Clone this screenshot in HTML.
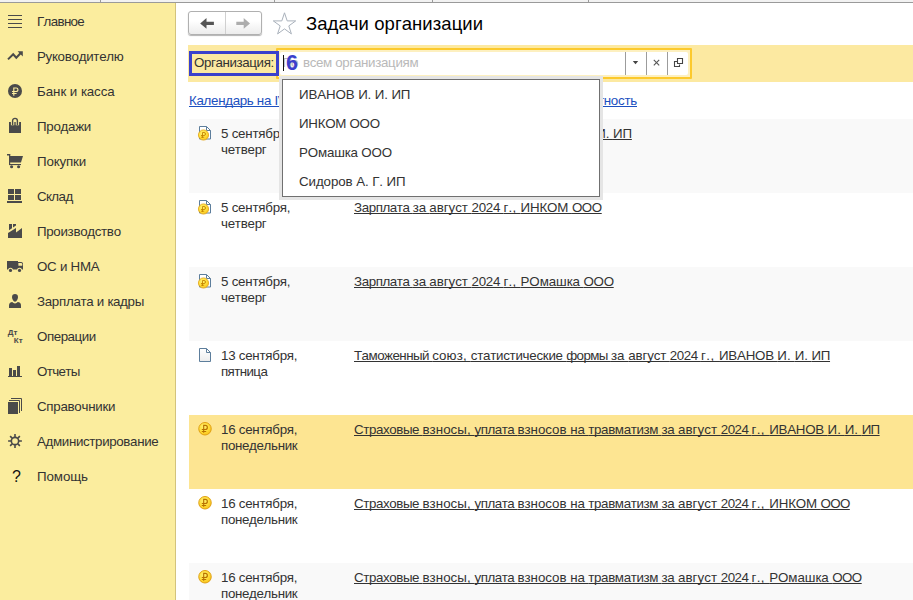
<!DOCTYPE html>
<html lang="ru">
<head>
<meta charset="utf-8">
<title>Задачи организации</title>
<style>
*{box-sizing:border-box;margin:0;padding:0}
html,body{width:913px;height:600px;overflow:hidden;background:#fff}
body{position:relative;font-kerning:none;font-family:"Liberation Sans",Arial,sans-serif;font-size:13.33px;color:#333}
.topstrip{position:absolute;left:0;top:0;width:913px;height:3px;background:#f2f2f2;border-bottom:1px solid #9a9a9a}
.topstrip i{position:absolute;top:0;width:1px;height:2px;background:#9a9a9a}
.side{position:absolute;left:0;top:3px;width:176px;height:597px;background:#fbed9e;border-right:1px solid #d3c37c}
.side .it{position:absolute;left:37px;line-height:16px;font-size:13.33px;color:#333;white-space:nowrap;}
.side .ic{position:absolute;left:0}
.side .q{position:absolute;left:12px;top:465px;font-size:16px;line-height:18px;color:#111}
.nav{position:absolute;left:188px;top:11px;width:74px;height:24px;border:1px solid #b0b0b0;border-radius:3px;background:linear-gradient(#fff 40%,#ececec);box-shadow:0 1px 1px rgba(0,0,0,.3)}
.nav i{position:absolute;left:36px;top:0;width:1px;height:22px;background:#d0d0d0}
.nav svg{position:absolute;left:0;top:0}
.star{position:absolute;left:271px;top:10px}
.title{position:absolute;left:306px;top:13px;font-size:18.5px;line-height:22px;color:#000;white-space:nowrap}
.fbar{position:absolute;left:188px;top:45px;width:725px;height:37px;background:#fce9a1}
.lbl{position:absolute;left:194px;top:55px;font-size:13.33px;line-height:16px;color:#333;white-space:nowrap}
.ann{position:absolute;left:189px;top:51px;width:90px;height:25px;border:3px solid #3a40cc}
.inp{position:absolute;left:276px;top:48px;width:416px;height:31px;border:2px solid #fcc92c;background:#fdf0c0;border-radius:1px}
.inp b{position:absolute;left:2px;top:2px;right:2px;bottom:2px;background:#fff;border-radius:2px}
.inp i{position:absolute;top:2px;width:1px;height:23px;background:#9c9c9c}
.inp svg{position:absolute;top:0;left:0}
.ph{position:absolute;left:282.500px;top:55px;font-size:13.33px;line-height:16px;color:#b9b9b9;white-space:nowrap}
.six{position:absolute;left:286px;top:52px;font-size:21.400px;font-weight:bold;line-height:23px;color:#3a40cc}
.caret{position:absolute;left:283px;top:55px;width:1px;height:16px;background:#111}
.link{position:absolute;top:93px;font-size:13.33px;line-height:16px;color:#1c50c0;text-decoration:underline;text-decoration-skip-ink:none;white-space:nowrap}
.row{position:absolute;left:189px;width:724px;height:74px}
.row.g{background:#f9f9f9}
.row.y{background:#fde592}
.row .d{position:absolute;left:32px;top:7px;font-size:13.33px;line-height:16px;color:#333;white-space:nowrap}
.row .t{position:absolute;left:165px;top:7px;font-size:13.33px;line-height:16px;color:#333;text-decoration:underline;text-decoration-skip-ink:none;white-space:nowrap}
.row .ri{position:absolute;left:8px;top:6px}
.dd{position:absolute;left:282px;top:79px;width:318px;height:118px;background:#fff;border:1px solid #707070;box-shadow:0 0 0 3px #e5e5e5}
.dd div{position:absolute;left:16px;font-size:13.33px;line-height:16px;color:#333;white-space:nowrap}
</style>
</head>
<body>
<svg width="0" height="0" style="position:absolute"><defs>
<radialGradient id="cg" cx="40%" cy="35%" r="70%"><stop offset="0" stop-color="#fff173"/><stop offset=".6" stop-color="#ffdd36"/><stop offset="1" stop-color="#f8bd1a"/></radialGradient>
<linearGradient id="dg" x1="0" y1="0" x2="0" y2="1"><stop offset="0" stop-color="#fff"/><stop offset="1" stop-color="#ececec"/></linearGradient>
</defs></svg>
<div class="topstrip"><i style="left:100px"></i><i style="left:274px"></i><i style="left:432px"></i><i style="left:588px"></i></div>

<div class="side">
<svg class="ic" style="top:5px" width="30" height="30" viewBox="0 0 30 30"><rect x="8" y="7" width="14" height="1" fill="#4a4a4a"/><rect x="8" y="11" width="14" height="1" fill="#4a4a4a"/><rect x="8" y="15" width="14" height="1" fill="#4a4a4a"/><rect x="8" y="19" width="14" height="1" fill="#4a4a4a"/></svg>
<svg class="ic" style="top:38px" width="30" height="30" viewBox="0 0 30 30"><polyline points="8,18.400 13.200,13.300 16.300,16.700 21,11.800" fill="none" stroke="#4a4a4a" stroke-width="2"/><polygon points="17.6,10.2 22.8,10.2 22.8,15.6" fill="#4a4a4a"/></svg>
<svg class="ic" style="top:73px" width="30" height="30" viewBox="0 0 30 30"><circle cx="15" cy="15" r="7" fill="#4a4a4a"/><path d="M13.8 19.8V12H16.200a1.750 1.750 0 0 1 0 3.500H12M12 17.500h4.600" fill="none" stroke="#fbed9e" stroke-width="1.15"/></svg>
<svg class="ic" style="top:108px" width="30" height="30" viewBox="0 0 30 30"><rect x="9" y="11" width="12" height="11" fill="#4a4a4a"/><path d="M12.600 14.300V9.800a2.400 2.400 0 0 1 4.800 0v4.500" fill="none" stroke="#fbed9e" stroke-width="3.400"/><path d="M12.600 14V9.800a2.400 2.400 0 0 1 4.800 0V14" fill="none" stroke="#4a4a4a" stroke-width="1.400"/></svg>
<svg class="ic" style="top:143px" width="30" height="30" viewBox="0 0 30 30"><polygon points="9,10 23,10 21,16.600 9,16.600" fill="#4a4a4a"/><rect x="9" y="8" width="1.200" height="11" fill="#4a4a4a"/><rect x="7" y="8" width="3.200" height="1.500" fill="#4a4a4a"/><rect x="9" y="18" width="12" height="1.100" fill="#4a4a4a"/><circle cx="11.600" cy="20.700" r="1.550" fill="#4a4a4a"/><circle cx="18.600" cy="20.700" r="1.550" fill="#4a4a4a"/></svg>
<svg class="ic" style="top:178px" width="30" height="30" viewBox="0 0 30 30"><rect x="8" y="8" width="6" height="5" fill="#4a4a4a"/><rect x="15" y="8" width="6" height="5" fill="#4a4a4a"/><rect x="8" y="14" width="6" height="5" fill="#4a4a4a"/><rect x="15" y="14" width="6" height="5" fill="#4a4a4a"/><rect x="7" y="20" width="15" height="2" fill="#4a4a4a"/></svg>
<svg class="ic" style="top:213px" width="30" height="30" viewBox="0 0 30 30"><polygon points="8,22 8,17 16,12 16,16.5 22,12 22,22" fill="#4a4a4a"/><polygon points="9,8 12,8 12,12.2 9,14.2" fill="#4a4a4a"/><polygon points="13,8 16,8 16,9.6 13,11.6" fill="#4a4a4a"/></svg>
<svg class="ic" style="top:248px" width="30" height="30" viewBox="0 0 30 30"><path d="M7 10h11v1h3.2a1.8 1.8 0 0 1 1.8 1.8V18.6H7z" fill="#4a4a4a"/><path d="M18.400 12h2.600a1.200 1.200 0 0 1 1.200 1.200v1.600h-3.800z" fill="#fbed9e"/><circle cx="10.5" cy="19.3" r="2.500" fill="#fbed9e"/><circle cx="19.5" cy="19.3" r="2.500" fill="#fbed9e"/><circle cx="10.5" cy="19.4" r="1.6" fill="#4a4a4a"/><circle cx="19.5" cy="19.4" r="1.6" fill="#4a4a4a"/></svg>
<svg class="ic" style="top:283px" width="30" height="30" viewBox="0 0 30 30"><path d="M9 22v-2.5a3.5 3.5 0 0 1 3.5-3.5h5a3.5 3.5 0 0 1 3.5 3.5V22z" fill="#4a4a4a"/><ellipse cx="15" cy="12.400" rx="3.900" ry="5" fill="#fbed9e"/><path d="M15 8c1.900 0 3 1.300 3 3.100 0 2.100-1.300 4.600-3 4.600s-3-2.500-3-4.600C12 9.300 13.100 8 15 8z" fill="#4a4a4a"/></svg>
<svg class="ic" style="top:318px" width="30" height="30" viewBox="0 0 30 30"><text x="7.800" y="13.900" font-family="Liberation Sans,Arial,sans-serif" font-weight="bold" font-size="8" fill="#4a4a4a">Дт</text><text x="13.800" y="22" font-family="Liberation Sans,Arial,sans-serif" font-weight="bold" font-size="8" fill="#4a4a4a">Кт</text></svg>
<svg class="ic" style="top:353px" width="30" height="30" viewBox="0 0 30 30"><rect x="9" y="12" width="3" height="8" fill="#4a4a4a"/><rect x="13" y="14" width="3" height="6" fill="#4a4a4a"/><rect x="17" y="10" width="3" height="10" fill="#4a4a4a"/><rect x="8" y="20" width="14" height="1" fill="#4a4a4a"/></svg>
<svg class="ic" style="top:388px" width="30" height="30" viewBox="0 0 30 30"><rect x="8" y="11" width="10" height="12" fill="#4a4a4a"/><path d="M9 9.500h10.500V22M11 7.500h10.500V20" fill="none" stroke="#4a4a4a" stroke-width="1"/></svg>
<svg class="ic" style="top:423px" width="30" height="30" viewBox="0 0 30 30"><path d="M19.00 15.00L21.90 15.00M17.83 17.83L19.88 19.88M15.00 19.00L15.00 21.90M12.17 17.83L10.12 19.88M11.00 15.00L8.10 15.00M12.17 12.17L10.12 10.12M15.00 11.00L15.00 8.10M17.83 12.17L19.88 10.12" stroke="#4a4a4a" stroke-width="1.600" fill="none"/><circle cx="15" cy="15" r="3.650" fill="none" stroke="#4a4a4a" stroke-width="1.600"/></svg>
<div class="q">?</div>
<div class="it" id="s0" style="top:11px;letter-spacing:-0.648px">Главное</div>
<div class="it" id="s1" style="top:46px;letter-spacing:-0.269px">Руководителю</div>
<div class="it" id="s2" style="top:81px;letter-spacing:-0.045px">Банк и касса</div>
<div class="it" id="s3" style="top:116px;letter-spacing:-0.290px">Продажи</div>
<div class="it" id="s4" style="top:151px;letter-spacing:-0.127px">Покупки</div>
<div class="it" id="s5" style="top:186px;letter-spacing:-0.550px">Склад</div>
<div class="it" id="s6" style="top:221px;letter-spacing:-0.313px">Производство</div>
<div class="it" id="s7" style="top:256px;letter-spacing:-0.249px">ОС и НМА</div>
<div class="it" id="s8" style="top:291px;letter-spacing:-0.297px">Зарплата и кадры</div>
<div class="it" id="s9" style="top:326px;letter-spacing:-0.447px">Операции</div>
<div class="it" id="s10" style="top:361px;letter-spacing:-0.619px">Отчеты</div>
<div class="it" id="s11" style="top:396px;letter-spacing:-0.277px">Справочники</div>
<div class="it" id="s12" style="top:431px;letter-spacing:-0.348px">Администрирование</div>
<div class="it" id="s13" style="top:466px;letter-spacing:-0.088px">Помощь</div>
</div>

<div class="nav"><i></i>
<svg width="72" height="22" viewBox="0 0 72 22"><path d="M11.200 11.400l6.300-5.300v3.700h7.400v3.300h-7.400v3.700z" fill="#555"/><path d="M61 11.400l-6.300-5.300v3.700h-7.400v3.300h7.400v3.700z" fill="#adadad"/></svg>
</div>
<svg class="star" width="28" height="28" viewBox="0 0 28 28"><path d="M13.500 2.800l2.700 8.100h8.500l-6.900 5 2.600 8-6.900-5-6.900 5 2.600-8-6.900-5h8.500z" fill="#fff" stroke="#a9b1bb" stroke-width="1"/></svg>
<div class="title" id="title" style="letter-spacing:0.072px">Задачи организации</div>

<div class="fbar"></div>
<div class="inp"><b></b><i style="left:347px"></i><i style="left:368px"></i><i style="left:389px"></i>
<svg width="412" height="27" viewBox="0 0 412 27"><path d="M354.800 11h5.400l-2.700 3.300z" fill="#444"/><path d="M375.800 9.900l5.400 5.400M381.200 9.900l-5.400 5.400" stroke="#555" stroke-width="1.100" fill="none"/><path d="M399.500 8.500h5v5h-5zM399 11.500h-2.500v5h5V14.500" fill="none" stroke="#444" stroke-width="1.100"/></svg>
</div>
<div class="lbl" id="lbl" style="letter-spacing:-0.380px">Организация:</div>
<div class="ann"></div>
<div class="ph" id="ph" style="letter-spacing:-0.326px"><span style="letter-spacing:-1px;margin-right:2px">По</span> всем организациям</div>
<div class="caret"></div>
<div class="six">6</div>

<a class="link" id="l0" style="left:189px;letter-spacing:-0.310px">Календарь на IV квартал 2024 г.</a>
<a class="link" id="l1" style="right:276px;letter-spacing:-0.250px">Моя налоговая отчетность</a>

<div class="row g" style="top:119px"><svg class="ri" width="16" height="18" viewBox="0 0 16 18"><path d="M2.500 1.500h7l4 4v8.500h-11z" fill="#fff" stroke="#5d7e9c" stroke-width="1"/><path d="M9.500 1.500v4h4" fill="none" stroke="#5d7e9c" stroke-width="1"/><circle cx="6.500" cy="10" r="5.100" fill="url(#cg)" stroke="#e3a514" stroke-width=".8"/><path d="M5.500 13V7.500h1.500a1.500 1.500 0 0 1 0 3H4M4 12.200h3.200" fill="none" stroke="#c58400" stroke-width=".9"/></svg><div class="d"><span id="da0" style="display:inline-block;letter-spacing:-0.235px">5 сентября,</span><br><span id="db0" style="display:inline-block;letter-spacing:-0.257px">четверг</span></div><div class="t" id="t0"><span style="letter-spacing:-0.414px">Зарплата </span><span style="letter-spacing:-0.225px">за </span><span style="letter-spacing:-0.043px">август </span><span style="letter-spacing:-0.302px">2024 </span><span style="letter-spacing:0.29px">г., </span><span style="letter-spacing:-0.243px">ИВАНОВ </span><span style="letter-spacing:0.121px">И. </span><span style="letter-spacing:-0.063px">И. </span><span style="letter-spacing:-0.134px">ИП</span></div></div>
<div class="row " style="top:193px"><svg class="ri" width="16" height="18" viewBox="0 0 16 18"><path d="M2.500 1.500h7l4 4v8.500h-11z" fill="#fff" stroke="#5d7e9c" stroke-width="1"/><path d="M9.500 1.500v4h4" fill="none" stroke="#5d7e9c" stroke-width="1"/><circle cx="6.500" cy="10" r="5.100" fill="url(#cg)" stroke="#e3a514" stroke-width=".8"/><path d="M5.500 13V7.500h1.500a1.500 1.500 0 0 1 0 3H4M4 12.200h3.200" fill="none" stroke="#c58400" stroke-width=".9"/></svg><div class="d"><span id="da1" style="display:inline-block;letter-spacing:-0.235px">5 сентября,</span><br><span id="db1" style="display:inline-block;letter-spacing:-0.257px">четверг</span></div><div class="t" id="t1"><span style="letter-spacing:-0.414px">Зарплата </span><span style="letter-spacing:-0.225px">за </span><span style="letter-spacing:-0.043px">август </span><span style="letter-spacing:-0.302px">2024 </span><span style="letter-spacing:0.29px">г., </span><span style="letter-spacing:-0.131px">ИНКОМ </span><span style="letter-spacing:-0.425px">ООО</span></div></div>
<div class="row g" style="top:267px"><svg class="ri" width="16" height="18" viewBox="0 0 16 18"><path d="M2.500 1.500h7l4 4v8.500h-11z" fill="#fff" stroke="#5d7e9c" stroke-width="1"/><path d="M9.500 1.500v4h4" fill="none" stroke="#5d7e9c" stroke-width="1"/><circle cx="6.500" cy="10" r="5.100" fill="url(#cg)" stroke="#e3a514" stroke-width=".8"/><path d="M5.500 13V7.500h1.500a1.500 1.500 0 0 1 0 3H4M4 12.200h3.200" fill="none" stroke="#c58400" stroke-width=".9"/></svg><div class="d"><span id="da2" style="display:inline-block;letter-spacing:-0.235px">5 сентября,</span><br><span id="db2" style="display:inline-block;letter-spacing:-0.257px">четверг</span></div><div class="t" id="t2"><span style="letter-spacing:-0.414px">Зарплата </span><span style="letter-spacing:-0.225px">за </span><span style="letter-spacing:-0.043px">август </span><span style="letter-spacing:-0.302px">2024 </span><span style="letter-spacing:0.29px">г., </span><span style="letter-spacing:-0.065px">РОмашка </span><span style="letter-spacing:-0.291px">ООО</span></div></div>
<div class="row " style="top:341px"><svg class="ri" width="16" height="18" viewBox="0 0 16 18"><path d="M2.500 1.500h7l4 4v9h-11z" fill="url(#dg)" stroke="#5d7e9c" stroke-width="1"/><path d="M9.500 1.500v4h4" fill="none" stroke="#5d7e9c" stroke-width="1"/></svg><div class="d"><span id="da3" style="display:inline-block;letter-spacing:-0.251px">13 сентября,</span><br><span id="db3" style="display:inline-block;letter-spacing:-0.600px">пятница</span></div><div class="t" id="t3"><span style="letter-spacing:-0.517px">Таможенный </span><span style="letter-spacing:0.151px">союз, </span><span style="letter-spacing:-0.258px">статистические </span><span style="letter-spacing:-0.6px">формы </span><span style="letter-spacing:0.075px">за </span><span style="letter-spacing:-0.157px">август </span><span style="letter-spacing:-0.442px">2024 </span><span style="letter-spacing:0.54px">г., </span><span style="letter-spacing:-0.243px">ИВАНОВ </span><span style="letter-spacing:0.121px">И. </span><span style="letter-spacing:-0.063px">И. </span><span style="letter-spacing:-0.284px">ИП</span></div></div>
<div class="row y" style="top:415px"><svg class="ri" width="16" height="18" viewBox="0 0 16 18"><circle cx="8" cy="7.750" r="6.250" fill="url(#cg)" stroke="#e0a012" stroke-width="1"/><path d="M6.700 11.800V4.400H8.300a2.050 2.050 0 0 1 0 4.100H4.800M4.800 10.500h4.400" fill="none" stroke="#b87200" stroke-width="1.150"/></svg><div class="d"><span id="da4" style="display:inline-block;letter-spacing:-0.251px">16 сентября,</span><br><span id="db4" style="display:inline-block;letter-spacing:-0.333px">понедельник</span></div><div class="t" id="t4"><span style="letter-spacing:-0.404px">Страховые </span><span style="letter-spacing:0.071px">взносы, </span><span style="letter-spacing:-0.498px">уплата </span><span style="letter-spacing:-0.004px">взносов </span><span style="letter-spacing:-0.127px">на </span><span style="letter-spacing:-0.356px">травматизм </span><span style="letter-spacing:-0.259px">за </span><span style="letter-spacing:0.057px">август </span><span style="letter-spacing:-0.562px">2024 </span><span style="letter-spacing:0.465px">г., </span><span style="letter-spacing:-0.243px">ИВАНОВ </span><span style="letter-spacing:0.121px">И. </span><span style="letter-spacing:-0.063px">И. </span><span style="letter-spacing:-0.584px">ИП</span></div></div>
<div class="row " style="top:489px"><svg class="ri" width="16" height="18" viewBox="0 0 16 18"><circle cx="8" cy="7.750" r="6.250" fill="url(#cg)" stroke="#e0a012" stroke-width="1"/><path d="M6.700 11.800V4.400H8.300a2.050 2.050 0 0 1 0 4.100H4.800M4.800 10.500h4.400" fill="none" stroke="#b87200" stroke-width="1.150"/></svg><div class="d"><span id="da5" style="display:inline-block;letter-spacing:-0.251px">16 сентября,</span><br><span id="db5" style="display:inline-block;letter-spacing:-0.333px">понедельник</span></div><div class="t" id="t5"><span style="letter-spacing:-0.404px">Страховые </span><span style="letter-spacing:0.071px">взносы, </span><span style="letter-spacing:-0.498px">уплата </span><span style="letter-spacing:-0.004px">взносов </span><span style="letter-spacing:-0.127px">на </span><span style="letter-spacing:-0.356px">травматизм </span><span style="letter-spacing:-0.259px">за </span><span style="letter-spacing:0.057px">август </span><span style="letter-spacing:-0.562px">2024 </span><span style="letter-spacing:0.465px">г., </span><span style="letter-spacing:-0.131px">ИНКОМ </span><span style="letter-spacing:-0.625px">ООО</span></div></div>
<div class="row g" style="top:563px"><svg class="ri" width="16" height="18" viewBox="0 0 16 18"><circle cx="8" cy="7.750" r="6.250" fill="url(#cg)" stroke="#e0a012" stroke-width="1"/><path d="M6.700 11.800V4.400H8.300a2.050 2.050 0 0 1 0 4.100H4.800M4.800 10.500h4.400" fill="none" stroke="#b87200" stroke-width="1.150"/></svg><div class="d"><span id="da6" style="display:inline-block;letter-spacing:-0.251px">16 сентября,</span><br><span id="db6" style="display:inline-block;letter-spacing:-0.333px">понедельник</span></div><div class="t" id="t6"><span style="letter-spacing:-0.404px">Страховые </span><span style="letter-spacing:0.071px">взносы, </span><span style="letter-spacing:-0.498px">уплата </span><span style="letter-spacing:-0.004px">взносов </span><span style="letter-spacing:-0.127px">на </span><span style="letter-spacing:-0.356px">травматизм </span><span style="letter-spacing:-0.259px">за </span><span style="letter-spacing:0.057px">август </span><span style="letter-spacing:-0.562px">2024 </span><span style="letter-spacing:0.465px">г., </span><span style="letter-spacing:-0.065px">РОмашка </span><span style="letter-spacing:-0.525px">ООО</span></div></div>

<div class="dd">
  <div id="d0" style="top:7px;letter-spacing:-0.117px">ИВАНОВ И. И. ИП</div>
  <div id="d1" style="top:36px;letter-spacing:-0.277px">ИНКОМ ООО</div>
  <div id="d2" style="top:65px;letter-spacing:-0.155px">РОмашка ООО</div>
  <div id="d3" style="top:94px;letter-spacing:-0.087px">Сидоров А. Г. ИП</div>
</div>
</body>
</html>
